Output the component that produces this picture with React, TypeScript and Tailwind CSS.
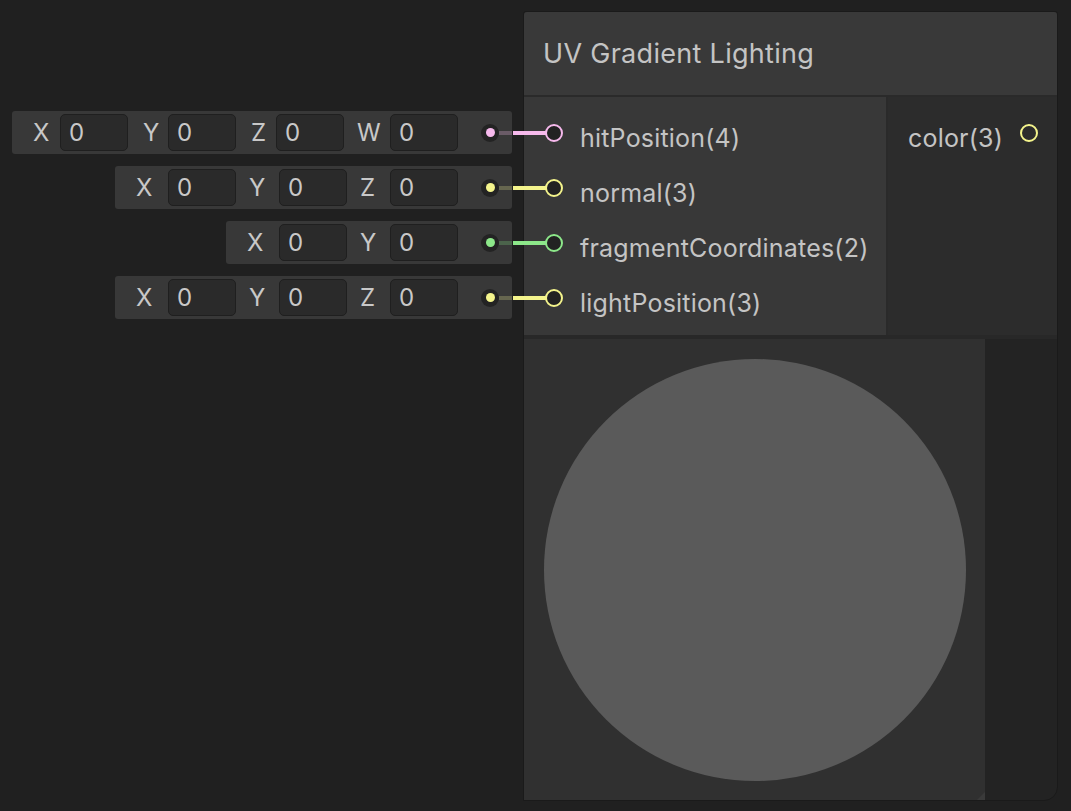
import React from "react"

type Port = {
  name: string
  color: string
  dim: string
  fields: string[]
}

const ports: Port[] = [
  { name: "hitPosition(4)", color: "#f6b9ec", dim: "#6a5b67", fields: ["X", "Y", "Z", "W"] },
  { name: "normal(3)", color: "#f4f48c", dim: "#66664f", fields: ["X", "Y", "Z"] },
  { name: "fragmentCoordinates(2)", color: "#8de88a", dim: "#4b634b", fields: ["X", "Y"] },
  { name: "lightPosition(3)", color: "#f4f48c", dim: "#66664f", fields: ["X", "Y", "Z"] },
]

const font = { fontFamily: "Inter, 'Noto Sans', sans-serif" }

function FieldRow({ port }: { port: Port }) {
  const wide = port.fields.length === 4
  return (
    <div className="flex h-[43px] items-center rounded-[3px] bg-[#383838] pl-[21px] text-[24px] text-[#c8c8c8]">
      {port.fields.map((f, i) => (
        <div key={f} className="flex items-center">
          <span
            className={
              wide
                ? f === "W"
                  ? "ml-[13px] w-[33px]"
                  : i === 0
                    ? "w-[27px]"
                    : "ml-[15px] w-[25px]"
                : i === 0
                  ? "w-[32px]"
                  : "ml-[13px] w-[30px]"
            }
          >
            {f}
          </span>
          <div className="flex h-[37px] w-[68px] items-center rounded-[5px] border border-[#1f1f1f] bg-[#2a2a2a] pl-[8px]">
            0
          </div>
        </div>
      ))}
      <div className="ml-[23px] flex h-[18px] w-[18px] items-center justify-center rounded-full bg-[#232323]">
        <div className="h-[9px] w-[9px] rounded-full" style={{ background: port.color }} />
      </div>
      <div className="h-[4px] w-[13px]" style={{ background: port.dim }} />
    </div>
  )
}

export default function App() {
  return (
    <div className="flex h-[811px] w-[1071px] items-start bg-[#202020]" style={font}>
      {/* constant inputs */}
      <div className="flex w-[523px] flex-col items-end gap-[12px] pr-[11px] pt-[111px]">
        {ports.map((p) => (
          <FieldRow key={p.name} port={p} />
        ))}
      </div>

      {/* node */}
      <div className="mt-[11px] flex w-[535px] flex-col rounded-t-[3px] rounded-br-[14px] border border-[#1a1a1a] bg-[#232323]">
        <div className="flex h-[83px] items-center rounded-t-[3px] bg-[#393939] pl-[19px] pt-[2px] text-[27px] tracking-[0.3px] text-[#c4c4c4]">
          UV Gradient Lighting
        </div>
        <div className="h-[2px] bg-[#2a2a2a]" />
        <div className="flex h-[238px]">
          <div className="flex w-[362px] flex-col bg-[#383838] pt-[8px]">
            {ports.map((p) => (
              <div key={p.name} className="flex h-[55px] items-center">
                <div className="-ml-[11px] h-[4px] w-[34px]" style={{ background: p.color }} />
                <div
                  className="-ml-[2px] h-[18px] w-[18px] rounded-full border-2 bg-[#222222]"
                  style={{ borderColor: p.color }}
                />
                <span className="ml-[17px] pt-[11px] text-[25px] leading-none tracking-[0.2px] text-[#c4c4c4]">
                  {p.name}
                </span>
              </div>
            ))}
          </div>
          <div className="w-[2px] bg-[#2a2a2a]" />
          <div className="flex flex-1 flex-col bg-[#2c2c2c] pt-[8px]">
            <div className="flex h-[55px] items-center justify-between pl-[20px] pr-[19px]">
              <span className="pt-[11px] text-[25px] leading-none tracking-[0.2px] text-[#c4c4c4]">color(3)</span>
              <div className="h-[18px] w-[18px] rounded-full border-2 border-[#f4f48c]" />
            </div>
          </div>
        </div>
        <div className="h-[4px] bg-[#282828]" />
        <div className="relative flex h-[461px] w-[461px] items-center justify-center bg-[#303030]">
          <div className="h-[422px] w-[422px] rounded-full bg-[#5a5a5a]" />
          {/* resize corner */}
          <div className="absolute bottom-0 right-0 h-0 w-0 border-b-[8px] border-l-[8px] border-b-[#3a3a3a] border-l-transparent" />
        </div>
      </div>
    </div>
  )
}
